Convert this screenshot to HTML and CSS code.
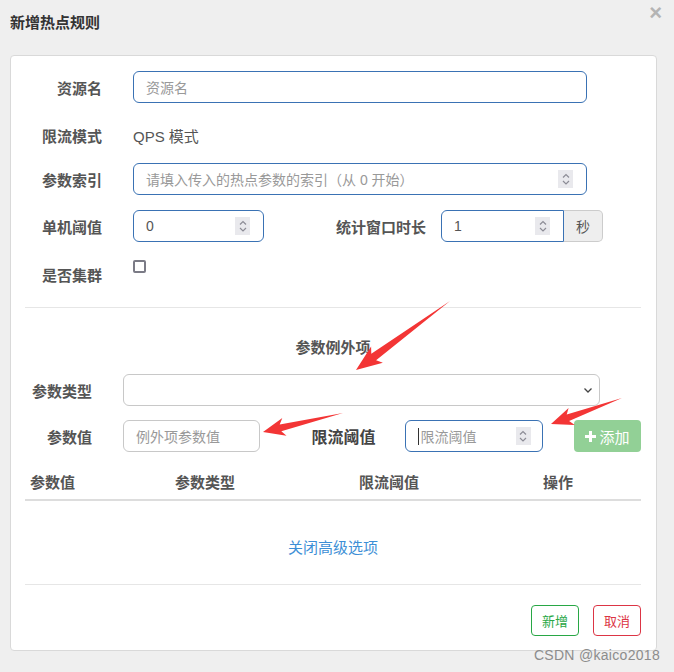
FILE: index.html
```html
<!DOCTYPE html>
<html lang="zh-CN">
<head>
  <meta charset="UTF-8" />
  <title>新增热点规则</title>
  <link rel="stylesheet" href="styles.css">
</head>
<body>
  <header class="modal-header">
    <h4 class="modal-title">新增热点规则</h4>
    <span class="close">&times;</span>
  </header>

  <div class="panel">
    <div class="row">
      <label class="label">资源名</label>
      <div class="input focus wide"><span class="ph">资源名</span></div>
    </div>

    <div class="row row-static">
      <label class="label">限流模式</label>
      <span class="static">QPS 模式</span>
    </div>

    <div class="row row-idx">
      <label class="label">参数索引</label>
      <div class="input focus wide">
        <span class="ph">请填入传入的热点参数的索引（从 0 开始）</span>
        <span class="spin"><svg width="12" height="18" viewBox="0 0 12 18"><path d="M3 7.5 6 4.5 9 7.5M3 11 6 14 9 11" fill="none" stroke="#8c8c96" stroke-width="1.2"/></svg></span>
      </div>
    </div>

    <div class="row">
      <label class="label">单机阈值</label>
      <div class="input focus small">
        <span class="val">0</span>
        <span class="spin"><svg width="12" height="18" viewBox="0 0 12 18"><path d="M3 7.5 6 4.5 9 7.5M3 11 6 14 9 11" fill="none" stroke="#8c8c96" stroke-width="1.2"/></svg></span>
      </div>
      <label class="label label-window">统计窗口时长</label>
      <div class="group">
        <div class="input focus group-input">
          <span class="val">1</span>
          <span class="spin"><svg width="12" height="18" viewBox="0 0 12 18"><path d="M3 7.5 6 4.5 9 7.5M3 11 6 14 9 11" fill="none" stroke="#8c8c96" stroke-width="1.2"/></svg></span>
        </div>
        <span class="addon">秒</span>
      </div>
    </div>

    <div class="row row-check">
      <label class="label">是否集群</label>
      <span class="checkbox"></span>
    </div>

    <hr class="divider">

    <h5 class="section-title">参数例外项</h5>

    <div class="row row-type">
      <label class="label label-sm">参数类型</label>
      <div class="input select">
        <svg width="10" height="8" viewBox="0 0 10 8"><path d="M1.5 2.5 5 6 8.5 2.5" fill="none" stroke="#444" stroke-width="1.3"/></svg>
      </div>
    </div>

    <div class="row row-item">
      <label class="label label-sm">参数值</label>
      <div class="input item-input"><span class="ph">例外项参数值</span></div>
      <label class="label label-limit">限流阈值</label>
      <div class="input focus item-input">
        <span class="ph"><span class="caret"></span>限流阈值</span>
        <span class="spin"><svg width="12" height="18" viewBox="0 0 12 18"><path d="M3 7.5 6 4.5 9 7.5M3 11 6 14 9 11" fill="none" stroke="#8c8c96" stroke-width="1.2"/></svg></span>
      </div>
      <button class="btn-add"><svg width="11" height="11" viewBox="0 0 11 11"><path d="M4 0h3v4h4v3H7v4H4V7H0V4h4z" fill="#fff"/></svg>添加</button>
    </div>

    <div class="table-head">
      <span>参数值</span>
      <span>参数类型</span>
      <span>限流阈值</span>
      <span>操作</span>
    </div>

    <a class="toggle">关闭高级选项</a>

    <hr class="divider divider-foot">

    <div class="footer">
      <button class="btn btn-ok">新增</button>
      <button class="btn btn-cancel">取消</button>
    </div>
  </div>

  <span class="watermark">CSDN @kaico2018</span>

  <svg class="marks" width="674" height="672" viewBox="0 0 674 672">
    <polygon points="450,301 376.1,360.2 382.9,362.7 356,370 371.1,346.5 371.3,353.8" fill="#f33535"/>
    <polygon points="343,413 281.3,431.2 286.5,435.7 263,432 282.3,418.1 279.7,424.4" fill="#f33535"/>
    <polygon points="622,398 569.1,421.1 574.8,424.9 551,424 568.6,408 566.7,414.5" fill="#f33535"/>
  </svg>
</body>
</html>
```

FILE: styles.css
```css
body {
  margin: 0;
  background: #efefef;
  font-family: "Liberation Sans", "Noto Sans CJK SC", sans-serif;
  color: #555;
  position: relative;
  width: 674px;
  height: 672px;
  overflow: hidden;
}

.modal-header {
  height: 45px;
  padding: 0 10px;
  display: flex;
  align-items: flex-start;
  justify-content: space-between;
}

.modal-title {
  margin: 14px 0 0;
  font-size: 15px;
  line-height: 18px;
  font-weight: bold;
  color: #333;
}

.close {
  margin-top: 1px;
  margin-right: 2px;
  font-size: 22px;
  line-height: 24px;
  font-weight: bold;
  color: #b4b4b4;
}

.panel {
  margin: 10px 17px 0 10px;
  background: #fff;
  border: 1px solid #d9d9d9;
  border-radius: 4px;
  padding: 15px 15px 14px 14px;
}

.row {
  display: flex;
  align-items: center;
  height: 32px;
  margin-bottom: 15px;
}

.row-static {
  margin-top: 16px;
  margin-bottom: 12px;
}

.row-check {
  margin-top: 2px;
  margin-bottom: 18px;
  align-items: flex-start;
}

.label {
  width: 77px;
  flex: none;
  text-align: right;
  font-size: 15px;
  font-weight: bold;
  color: #555;
  margin-right: 31px;
}

.row-check .label {
  margin-top: 7px;
}

.static {
  font-size: 15px;
  color: #555;
}

.input {
  box-sizing: border-box;
  height: 32px;
  border: 1px solid #c8c8c8;
  border-radius: 6px;
  padding: 0 13px 0 12px;
  display: flex;
  align-items: center;
  justify-content: space-between;
  font-size: 14px;
  background: #fff;
}

.focus {
  border-color: #3a72b4;
}

.wide {
  width: 454px;
}

.small {
  width: 131px;
}

.ph {
  color: #999;
  display: flex;
  align-items: center;
}

.val {
  color: #555;
}

.spin {
  width: 15px;
  height: 18px;
  background: #e9e9ed;
  display: flex;
  justify-content: center;
}

.label-window {
  width: 162px;
  margin-right: 15px;
}

.group {
  display: flex;
}

.group-input {
  width: 123px;
  border-radius: 6px 0 0 6px;
}

.addon {
  box-sizing: border-box;
  width: 39px;
  height: 32px;
  border: 1px solid #ccc;
  border-left: none;
  border-radius: 0 5px 5px 0;
  background: #eee;
  display: flex;
  align-items: center;
  justify-content: center;
  font-size: 14px;
  color: #555;
}

.checkbox {
  box-sizing: border-box;
  width: 13px;
  height: 13px;
  margin-top: 3px;
  border: 2px solid #7b7b86;
  border-radius: 2px;
}

.divider {
  border: none;
  border-top: 1px solid #e6e6e6;
  margin: 0;
}

.section-title {
  margin: 30px 0 16px;
  text-align: center;
  font-size: 15px;
  line-height: 20px;
  font-weight: bold;
  color: #555;
}

.label-sm {
  width: 67px;
}

.row-type {
  margin-bottom: 14px;
}

.select {
  width: 477px;
  padding-right: 6px;
  justify-content: flex-end;
}

.item-input {
  width: 139px;
}

.item-input .spin {
  margin-right: -2px;
}

.label-limit {
  width: auto;
  margin-left: 51px;
  margin-right: 30px;
  font-size: 16px;
  color: #444;
}

.caret {
  width: 1px;
  height: 17px;
  background: #333;
  margin-right: 1px;
}

.btn-add {
  margin-left: 31px;
  width: 68px;
  height: 32px;
  border: none;
  border-radius: 4px;
  background: #92d096;
  color: #fff;
  font-family: inherit;
  font-size: 15px;
  display: flex;
  align-items: center;
  justify-content: center;
  gap: 3px;
  padding: 0;
}

.table-head {
  display: grid;
  grid-template-columns: 145px 184px 184px 1fr;
  margin-top: 21px;
  padding: 0 5px 6px;
  border-bottom: 2px solid #ddd;
  font-size: 15px;
  font-weight: bold;
  line-height: 20px;
  color: #555;
}

.toggle {
  display: block;
  margin: 37px 0 26px;
  text-align: center;
  font-size: 15px;
  line-height: 20px;
  color: #3d8fd6;
}

.footer {
  display: flex;
  justify-content: flex-end;
  gap: 14px;
  margin-top: 20px;
}

.btn {
  height: 31px;
  padding: 0 10px;
  background: #fff;
  border-radius: 4px;
  font-family: inherit;
  font-size: 13px;
}

.btn-ok {
  border: 1px solid #28a745;
  color: #28a745;
}

.btn-cancel {
  border: 1px solid #dc3545;
  color: #dc3545;
}

.watermark {
  position: absolute;
  right: 14px;
  top: 647px;
  font-size: 14px;
  color: #8c8c8c;
  letter-spacing: 0.3px;
}

.marks {
  position: absolute;
  top: 0;
  left: 0;
  pointer-events: none;
}
```
